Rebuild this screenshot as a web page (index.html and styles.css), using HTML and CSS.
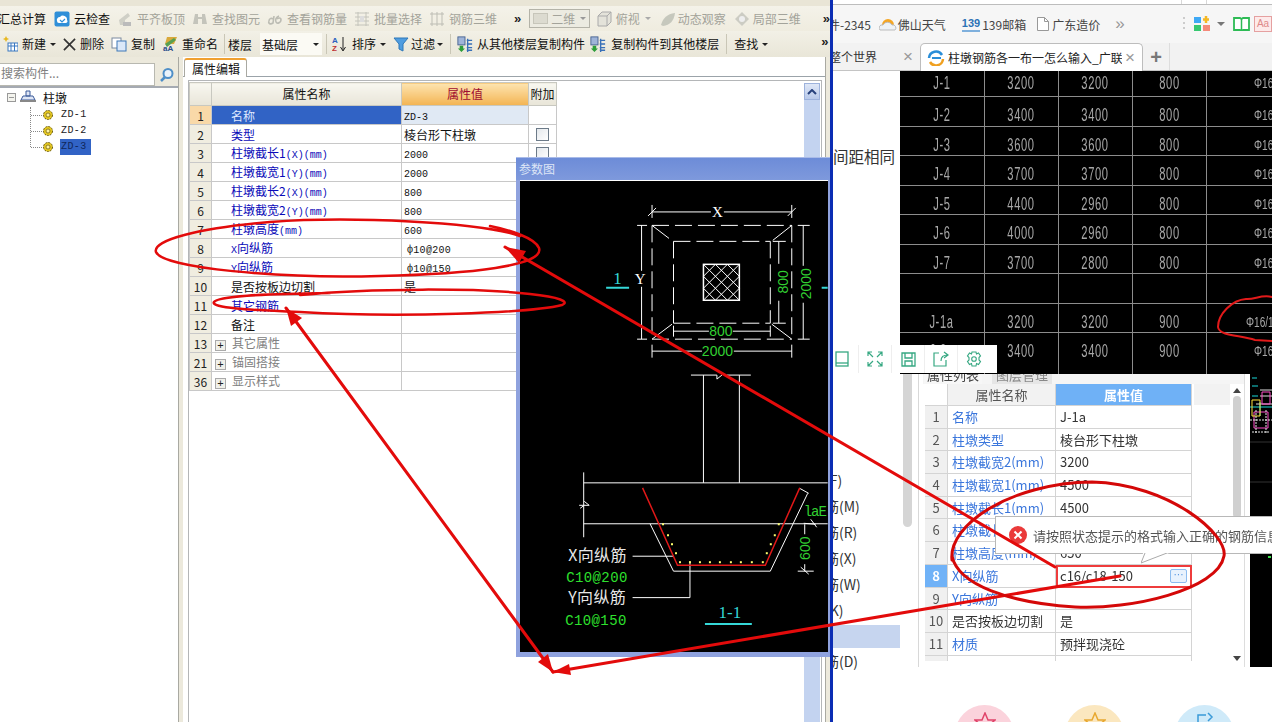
FILE: index.html
```html
<!DOCTYPE html>
<html lang="zh">
<head>
<meta charset="utf-8">
<title>柱墩钢筋</title>
<link rel="stylesheet" href="styles.css">
</head>
<body>
<div class="app">
  <div class="toolbar row1">
    <span class="tb first"><span>汇总计算</span></span>
    <span class="tb cloud"><svg class="ic" viewBox="0 0 16 16"><rect x="0.5" y="0.5" width="15" height="15" rx="2" fill="#2f8fd8"/><path d="M3 10a3 3 0 0 1 3-4 4 4 0 0 1 7 3 2 2 0 0 1-1 3H5a2 2 0 0 1-2-2z" fill="#fff"/><path d="M6 9l2 2 3-3" stroke="#2f8fd8" stroke-width="1.2" fill="none"/></svg><span>云检查</span></span>
    <span class="tb off"><svg class="ic" viewBox="0 0 16 16"><path d="M2 9l9-7 2 3-5 4v5H3z" fill="#cfcfc6"/><rect x="6" y="11" width="8" height="4" fill="#bbb"/></svg><span>平齐板顶</span></span>
    <span class="tb off"><svg class="ic" viewBox="0 0 16 16"><path d="M3 3h3v3h4V3h3l2 10h-5V8H6v5H1z" fill="#c4c4bb"/></svg><span>查找图元</span></span>
    <span class="tb off"><svg class="ic" viewBox="0 0 16 16"><path d="M2 10c0-3 3-3 4-2M7 5l-1 7c-3 2-5 0-4-2M12 5c-3 1-4 4-3 6s5 1 5-2-3-2-4-1" stroke="#bcbcb3" stroke-width="1.6" fill="none"/></svg><span>查看钢筋量</span></span>
    <span class="tb off"><svg class="ic" viewBox="0 0 16 16"><path d="M1 2h14M1 6h14M1 10h14M1 14h14M4 1v14M12 1v14" stroke="#c4c4bb" fill="none"/><rect x="6" y="5" width="4" height="6" fill="#ddd"/></svg><span>批量选择</span></span>
    <span class="tb off"><svg class="ic" viewBox="0 0 16 16"><path d="M1 3h14M1 13h14M3 1v14M8 1v14M13 1v14" stroke="#bdbdb4" fill="none"/></svg><span>钢筋三维</span></span>
    <span class="more m1">»</span>
    <span class="combo2d"><i class="sw"></i><span>二维</span><i class="car c2d"></i></span>
    <span class="tb off t3"><svg class="ic" viewBox="0 0 16 16"><path d="M2 5l4-4h9v10l-4 4H2zM2 5h9v10M11 5l4-4" stroke="#aaa" fill="#e4e3da"/></svg><span>俯视</span><i class="car cg"></i></span>
    <span class="tb off t4"><svg class="ic" viewBox="0 0 16 16"><path d="M1 14c2-7 6-11 14-12-1 8-5 12-12 13z" fill="#c6c8bd"/></svg><span>动态观察</span></span>
    <span class="tb off t5"><svg class="ic" viewBox="0 0 16 16"><path d="M8 1l7 7-7 7-7-7z" fill="#ccccc3"/><circle cx="8" cy="8" r="3" fill="#eee"/></svg><span>局部三维</span></span>
    <span class="more m2">»</span>
  </div>
  <div class="toolbar row2">
    <span class="tb"><svg class="ic" viewBox="0 0 16 16"><path d="M4 0l1 2 2 1-2 1-1 2-1-2-2-1 2-1z" fill="#e8b820"/><rect x="6" y="7" width="10" height="8" fill="#fff" stroke="#3a78c0"/><path d="M6 10h10M9 7v8M12.500 7v8" stroke="#3a78c0"/></svg><span>新建</span><i class="car"></i></span>
    <span class="tb"><svg class="ic del" viewBox="0 0 14 14"><path d="M1 1l12 12M13 1L1 13" stroke="#333" stroke-width="1.8"/></svg><span>删除</span></span>
    <span class="tb"><svg class="ic" viewBox="0 0 16 16"><rect x="1" y="2" width="9" height="10" fill="#fff" stroke="#7a8aa0"/><rect x="6" y="5" width="9" height="10" fill="#dbe8f8" stroke="#3f78b8"/></svg><span>复制</span></span>
    <span class="tb"><svg class="ic" viewBox="0 0 16 16"><path d="M5 1h10l-3 7H3z" fill="#d9a93c"/><path d="M3 8l9-6 2 2-9 7z" fill="#58a050"/><text x="1" y="15" class="az">aA</text></svg><span>重命名</span></span>
    <i class="sep s1"></i>
    <span class="lbl">楼层</span>
    <span class="floor"><span>基础层</span><i class="car"></i></span>
    <i class="sep s2"></i>
    <span class="tb x6"><svg class="ic" viewBox="0 0 16 16"><text x="0" y="7" class="sort a">A</text><text x="0" y="15" class="sort z">Z</text><path d="M11 1v13M8.500 11l2.500 4 2.500-4" stroke="#222" fill="none"/></svg><span>排序</span><i class="car"></i></span>
    <span class="tb x3"><svg class="ic" viewBox="0 0 16 16"><path d="M1 2h14l-5 6v7l-4-2V8z" fill="#4f9de0" stroke="#2f78b8"/></svg><span>过滤</span><i class="car"></i></span>
    <i class="sep"></i>
    <span class="tb x4"><svg class="ic" viewBox="0 0 18 18"><rect x="1" y="1" width="8" height="9" fill="#9fb4d8" stroke="#44608f"/><path d="M3 11h4v3h2l-4 4-4-4h2z" fill="#2e9e3a"/><path d="M11 5h6M11 9h6M11 13h6M11 16h6M12 3v15" stroke="#3870b8" stroke-width="1.500"/></svg><span>从其他楼层复制构件</span></span>
    <span class="tb x5"><svg class="ic" viewBox="0 0 18 18"><rect x="1" y="1" width="8" height="9" fill="#9fb4d8" stroke="#44608f"/><path d="M3 11h4v3h2l-4 4-4-4h2z" fill="#2e9e3a"/><path d="M11 5h6M11 9h6M11 13h6M11 16h6M12 3v15" stroke="#3870b8" stroke-width="1.500"/></svg><span>复制构件到其他楼层</span></span>
    <i class="sep"></i>
    <span class="tb"><span>查找</span><i class="car"></i></span>
    <span class="more m3">»</span>
  </div>

  <div class="work">
    <aside class="side">
      <div class="search">
        <span class="search-input">搜索构件...</span>
        <span class="search-btn"><svg width="16" height="16" viewBox="0 0 16 16"><circle cx="9" cy="6.500" r="4.500" fill="#eaf3fb" stroke="#4f8fc8" stroke-width="2"/><path d="M6 10l-4 4" stroke="#4f8fc8" stroke-width="2.500"/></svg></span>
      </div>
      <div class="tree">
        <div class="root"><i class="minus"></i><svg class="rooticon" width="16" height="14" viewBox="0 0 16 14"><path d="M6 1h4v5H6zM3 6h10l2 4H1z" fill="#dfe6f5" stroke="#3a5a9a"/><path d="M0 11h16" stroke="#888" stroke-width="2"/></svg><span>柱墩</span></div>
        <ul class="kids">
          <li><svg class="gear" viewBox="0 0 12 12"><circle cx="6" cy="6" r="4.500" fill="#e5c820" stroke="#6a5a10" stroke-dasharray="2 1"/><circle cx="6" cy="6" r="2" fill="#fff3a0" stroke="#6a5a10" stroke-width=".7"/></svg><span class="zd">ZD-1</span></li>
          <li><svg class="gear" viewBox="0 0 12 12"><circle cx="6" cy="6" r="4.500" fill="#e5c820" stroke="#6a5a10" stroke-dasharray="2 1"/><circle cx="6" cy="6" r="2" fill="#fff3a0" stroke="#6a5a10" stroke-width=".7"/></svg><span class="zd">ZD-2</span></li>
          <li><svg class="gear" viewBox="0 0 12 12"><circle cx="6" cy="6" r="4.500" fill="#e5c820" stroke="#6a5a10" stroke-dasharray="2 1"/><circle cx="6" cy="6" r="2" fill="#fff3a0" stroke="#6a5a10" stroke-width=".7"/></svg><span class="zd sel">ZD-3</span></li>
        </ul>
      </div>
    </aside>
    <section class="main">
      <div class="tabbar"><span class="tab">属性编辑</span></div>
      <div class="frame">
        <table class="props">
          <colgroup><col class="c0"><col class="c1"><col class="c2"><col class="c3"></colgroup>
          <thead><tr><th></th><th>属性名称</th><th class="hv">属性值</th><th>附加</th></tr></thead>
          <tbody>
            <tr class="cur"><td class="n">1</td><td class="b">名称</td><td><span class="lat">ZD-3</span></td><td></td></tr>
            <tr><td class="n">2</td><td class="b">类型</td><td>棱台形下柱墩</td><td><i class="chk"></i></td></tr>
            <tr><td class="n">3</td><td class="b">柱墩截长1<span class="lat">(X)(mm)</span></td><td><span class="lat">2000</span></td><td><i class="chk"></i></td></tr>
            <tr><td class="n">4</td><td class="b">柱墩截宽1<span class="lat">(Y)(mm)</span></td><td><span class="lat">2000</span></td><td><i class="chk"></i></td></tr>
            <tr><td class="n">5</td><td class="b">柱墩截长2<span class="lat">(X)(mm)</span></td><td><span class="lat">800</span></td><td><i class="chk"></i></td></tr>
            <tr><td class="n">6</td><td class="b">柱墩截宽2<span class="lat">(Y)(mm)</span></td><td><span class="lat">800</span></td><td><i class="chk"></i></td></tr>
            <tr><td class="n">7</td><td class="b">柱墩高度<span class="lat">(mm)</span></td><td><span class="lat">600</span></td><td><i class="chk"></i></td></tr>
            <tr><td class="n">8</td><td class="b"><span class="lat">X</span>向纵筋</td><td><span class="lat bar">ф10@200</span></td><td></td></tr>
            <tr><td class="n">9</td><td class="b"><span class="lat">Y</span>向纵筋</td><td><span class="lat bar">ф10@150</span></td><td></td></tr>
            <tr><td class="n">10</td><td class="k">是否按板边切割</td><td>是</td><td></td></tr>
            <tr><td class="n">11</td><td class="b">其它钢筋</td><td></td><td></td></tr>
            <tr><td class="n">12</td><td class="k">备注</td><td></td><td></td></tr>
            <tr><td class="n">13</td><td class="g"><i class="plus">+</i>其它属性</td><td></td><td></td></tr>
            <tr><td class="n">21</td><td class="g"><i class="plus">+</i>锚固搭接</td><td></td><td></td></tr>
            <tr><td class="n">36</td><td class="g"><i class="plus">+</i>显示样式</td><td></td><td></td></tr>
          </tbody>
        </table>
        <div class="vbar"><span class="vbtn"><svg width="10" height="6" viewBox="0 0 10 6"><path d="M1 5l4-4 4 4" stroke="#27417c" stroke-width="2" fill="none"/></svg></span></div>
      </div>
    </section>
  </div>

  <div class="param">
    <div class="param-title">参数图</div>
    <svg class="cad" width="308" height="472" viewBox="520 180 308 472">
      <g stroke="#fff" fill="none" stroke-width="1">
        <path d="M652 204v13M792 204v13M652 211H711M724 211H792M648 215l8-8M788 215l8-8"/>
        <path d="M652 224.500H792M652 338.500H792M652 224.500V338.500M792 224.500V338.500" stroke-dasharray="17 6"/>
        <path d="M673.500 240.500H770.500M673.500 322.500H770.500M673.500 240.500V322.500M770.500 240.500V322.500" stroke-dasharray="17 6"/>
        <path d="M652 224.500l17 13M792 224.500l-19 15M652 338.500l20-15M792 338.500l-20-15"/>
        <path d="M641.500 224.500V270M641.500 286V338.500M637 224.500h10M637 338.500h10"/>
        <path d="M779 240.500V263M779 300V322.500M773 240.500h13M773 322.500h13"/>
        <path d="M803.500 224.500V265M803.500 302V338.500M798 224.500h12M798 338.500h12"/>
        <path d="M673.500 330.500H709M733 330.500H770.500M673.500 325v11M770.500 325v11"/>
        <path d="M652 350.500H702M734 350.500H792M652 344v13M792 344v13"/>
        <rect x="703.500" y="263.500" width="36" height="36" stroke-width="1.500"/>
        <path d="M703.500 275.500l12-12M703.500 287.500l24-24M703.500 299.500l36-36M715.500 299.500l24-24M727.500 299.500l12-12M715.500 263.500l24 24M703.500 263.500l36 36M727.500 263.500l12 12M703.500 275.500l24 24M703.500 287.500l12 12"/>
        <path d="M691 374.500H717M727 374.500H751M703.500 374.500V482.500M739.500 374.500V482.500M722 374.500l-5 4v-4"/>
        <path d="M583.500 472V537M583.500 482.500H828M583.500 523.500H828M579 505h10l-5-4M584 505l-4 3"/>
        <path d="M650 523.500L673.500 571H770.500L808 493"/>
        <path d="M800 488l9 5M804 523l12 1M811 519l6 8"/>
        <path d="M632.500 556H674M632.500 597.500H690V561"/>
        <path d="M805 524V534M805 564V571M798 571h16M801 567l8 7"/>
      </g>
      <path d="M642.500 487.500L677.500 565H765.500L800 487.500" stroke="#e01818" stroke-width="1.500" fill="none"/>
      <g fill="#ffff70">
        <rect x="662" y="523" width="2" height="2"/><rect x="667" y="534" width="2" height="2"/><rect x="671" y="543" width="2" height="2"/><rect x="675" y="552" width="2" height="2"/><rect x="679" y="561" width="2" height="2"/>
        <rect x="689" y="561" width="2" height="2"/><rect x="699" y="561" width="2" height="2"/><rect x="709" y="561" width="2" height="2"/><rect x="719" y="561" width="2" height="2"/><rect x="730" y="561" width="2" height="2"/><rect x="740" y="561" width="2" height="2"/><rect x="751" y="561" width="2" height="2"/><rect x="762" y="561" width="2" height="2"/>
        <rect x="766" y="552" width="2" height="2"/><rect x="770" y="543" width="2" height="2"/><rect x="774" y="534" width="2" height="2"/><rect x="778" y="523" width="2" height="2"/>
      </g>
      <g class="t-w">
        <text x="717.500" y="216" text-anchor="middle">X</text>
        <text x="640" y="283" text-anchor="middle">Y</text>
      </g>
      <g class="t-g">
        <text x="721" y="335.500" text-anchor="middle">800</text>
        <text x="717.500" y="355.500" text-anchor="middle">2000</text>
        <text transform="translate(788 281) rotate(-90)" text-anchor="middle">800</text>
        <text transform="translate(811 283) rotate(-90)" text-anchor="middle">2000</text>
        <text transform="translate(810 548) rotate(-90)" text-anchor="middle">600</text>
      </g>
      <text x="804" y="516" class="t-la">laE</text>
      <text x="617.500" y="283" class="t-c" text-anchor="middle">1</text>
      <text x="730" y="618" class="t-c" text-anchor="middle">1-1</text>
      <path d="M606 287h23M822 287h6M705 624h47" stroke="#35d8d8" stroke-width="2"/>
      <text x="568" y="561" class="t-l">X向纵筋</text>
      <text x="566" y="582" class="t-m">C10@200</text>
      <text x="568" y="603" class="t-l">Y向纵筋</text>
      <text x="565" y="625" class="t-m">C10@150</text>
    </svg>
  </div>
</div>

<div class="divider"></div>

<div class="browser">
  <div class="chrome-top"><i class="cut"></i><i class="cut"></i></div>
  <div class="bookmarks">
    <span class="bm bm0">件-2345</span>
    <span class="bm bm1"><svg width="18" height="16" viewBox="0 0 18 16"><path d="M3 9a6 6 0 0 1 12 0z" fill="#f5a623"/><path d="M1 14a3 3 0 0 1 3-5 5 5 0 0 1 9 0 3 3 0 0 1 3 5z" fill="#eef2f5" stroke="#bbb"/></svg>佛山天气</span>
    <span class="bm bm2"><b class="mail">139</b>139邮箱</span>
    <span class="bm bm3"><svg width="12" height="14" viewBox="0 0 12 14"><path d="M.5.500h7l4 4v9H.5z" fill="#fff" stroke="#999"/><path d="M7.500.500v4h4" fill="none" stroke="#999"/></svg>广东造价</span>
    <span class="bm-more">»</span>
    <span class="bm-tools">
      <i class="dots"></i>
      <svg width="17" height="16" viewBox="0 0 17 16"><rect y="1" width="7" height="6" fill="#3fa9f5"/><rect y="9" width="7" height="6" fill="#37c871"/><rect x="9" y="9" width="7" height="6" fill="#f58a7a"/><path d="M12 0v7M9 3.500h6" stroke="#f5b823" stroke-width="2.500"/></svg>
      <i class="tcar"></i>
      <svg class="book" width="17" height="14" viewBox="0 0 17 14"><path d="M1 1h6l1.500 1L10 1h6v12h-6l-1.500 1L7 13H1z" fill="#fff" stroke="#2dbb55" stroke-width="1.800"/><path d="M8.500 2v11" stroke="#2dbb55" stroke-width="1.500"/></svg>
      <span class="aa">Aa</span>
    </span>
  </div>
  <div class="tabs">
    <span class="btab"><span class="bprev">整个世界</span><i class="bx">×</i></span>
    <span class="btab on"><svg width="18" height="16" viewBox="0 0 18 16"><path d="M2 8a7 7 0 0 1 13-3" stroke="#2a8ed8" stroke-width="2.500" fill="none"/><path d="M16 9a7 7 0 0 1-13 3" stroke="#f0a020" stroke-width="2.500" fill="none"/><path d="M5 8h9" stroke="#2a8ed8" stroke-width="2"/></svg><span class="btitle">柱墩钢筋各一布一怎么输入_广联</span><i class="bx">×</i></span>
    <span class="bplus">+</span>
    <i class="bsep"></i>
  </div>
  <div class="content">
    <div class="col-left">
      <p class="same">间距相同</p>
      <ul class="labels">
        <li>柱(F)</li>
        <li>底筋(M)</li>
        <li>底筋(R)</li>
        <li>底筋(X)</li>
        <li>底筋(W)</li>
        <li>柱(K)</li>
        <li class="hl"></li>
        <li>底筋(D)</li>
      </ul>
    </div>
    <div class="col-right">
      <div class="dwg">
        <span><i>J-1</i></span><span><i>3200</i></span><span><i>3200</i></span><span><i>800</i></span><span class="ph"><i>Φ16</i></span>
        <span><i>J-2</i></span><span><i>3400</i></span><span><i>3400</i></span><span><i>800</i></span><span class="ph"><i>Φ16</i></span>
        <span><i>J-3</i></span><span><i>3600</i></span><span><i>3600</i></span><span><i>800</i></span><span class="ph"><i>Φ16</i></span>
        <span><i>J-4</i></span><span><i>3700</i></span><span><i>3700</i></span><span><i>800</i></span><span class="ph"><i>Φ16</i></span>
        <span><i>J-5</i></span><span><i>4400</i></span><span><i>2960</i></span><span><i>800</i></span><span class="ph"><i>Φ16</i></span>
        <span><i>J-6</i></span><span><i>4000</i></span><span><i>2960</i></span><span><i>800</i></span><span class="ph"><i>Φ16</i></span>
        <span><i>J-7</i></span><span><i>3700</i></span><span><i>2800</i></span><span><i>800</i></span><span class="ph"><i>Φ16</i></span>
        <span></span><span></span><span></span><span></span><span class="ph"></span>
        <span><i>J-1a</i></span><span><i>3200</i></span><span><i>3200</i></span><span><i>900</i></span><span class="ph ph2"><i>Φ16/12</i></span>
        <span class="last"><i>J-2a</i></span><span class="last"><i>3400</i></span><span class="last"><i>3400</i></span><span class="last"><i>900</i></span><span class="ph last"><i>Φ16</i></span>
      </div>
      <div class="shot">
        <div class="shot-left"><i class="sthumb"></i></div>
        <div class="shot-frame">
          <div class="shot-tabs"><span class="st on">属性列表</span><span class="st">图层管理</span></div>
          <div class="shot-body">
            <div class="pgrid">
              <span class="ph0"></span><span class="ph1">属性名称</span><span class="ph2h">属性值</span>
              <span class="i">1</span><span class="nm">名称</span><span class="vl">J-1a</span>
              <span class="i">2</span><span class="nm">柱墩类型</span><span class="vl">棱台形下柱墩</span>
              <span class="i">3</span><span class="nm">柱墩截宽2(mm)</span><span class="vl">3200</span>
              <span class="i">4</span><span class="nm">柱墩截宽1(mm)</span><span class="vl">4500</span>
              <span class="i">5</span><span class="nm">柱墩截长1(mm)</span><span class="vl">4500</span>
              <span class="i">6</span><span class="nm">柱墩截长2(mm)</span><span class="vl">3200</span>
              <span class="i">7</span><span class="nm">柱墩高度(mm)</span><span class="vl">650</span>
              <span class="i cur8">8</span><span class="nm">X向纵筋</span><span class="vl err">c16/c18-150<i class="dotbtn">···</i></span>
              <span class="i">9</span><span class="nm">Y向纵筋</span><span class="vl"></span>
              <span class="i">10</span><span class="nm dk">是否按板边切割</span><span class="vl">是</span>
              <span class="i">11</span><span class="nm">材质</span><span class="vl">预拌现浇砼</span>
              <span class="i"></span><span class="nm"></span><span class="vl"></span>
            </div>
            <div class="shot-head-fill"></div>
            <div class="shot-scroll"><i class="up"></i><i class="thumb"></i><i class="down"></i></div>
          </div>
        </div>
        <div class="shot-cad">
          <svg width="22" height="293" viewBox="0 0 22 293"><g fill="none" stroke-width="1"><path d="M2 4h5M2 12h6M2 22h6M0 33h22M10 28v14" stroke="#19d8d8"/><path d="M10 16h12M10 22h12M6 30h16" stroke="#ddd"/><path d="M12 18h8v12h-8zM4 38h14v16H4z" stroke="#ff4dc8"/><path d="M2 26h8v16H2z" stroke="#ffe23a"/><path d="M0 46h22M2 58h18M6 36v24M16 36v24" stroke="#e8e8e8" stroke-dasharray="2 1"/><path d="M0 68h22M0 108h22M0 172h22" stroke="#333"/><path d="M18 183h3" stroke="#3be04a" stroke-width="2"/></g></svg>
        </div>
      </div>
      <div class="badges">
        <span class="badge pink"><svg width="22" height="14" viewBox="0 0 22 14"><path d="M11 1l3 7h7l-6 5H7L1 8h7z" fill="none" stroke="#e0446a" stroke-width="1.500"/></svg></span>
        <span class="badge gold"><svg width="22" height="14" viewBox="0 0 22 14"><path d="M11 1l3 7h7l-6 5H7L1 8h7z" fill="none" stroke="#e8a830" stroke-width="1.500"/></svg></span>
        <span class="badge sky"><svg width="22" height="14" viewBox="0 0 22 14"><path d="M4 13V3h8M14 1l4 4-4 4M16 13H8" fill="none" stroke="#3a9ad8" stroke-width="1.500"/></svg></span>
      </div>
    </div>
    <div class="float-tools">
      <span class="ft"><svg width="14" height="16" viewBox="0 0 14 16"><rect x="1" y="1" width="12" height="14" fill="none" stroke="#36a882" stroke-width="1.300"/><path d="M1 12h12" stroke="#36a882" stroke-width="1.300"/></svg></span>
      <span class="ft"><svg width="16" height="16" viewBox="0 0 16 16"><path d="M1 1l5 5M15 1l-5 5M1 15l5-5M15 15l-5-5M1 5V1h4M11 1h4v4M1 11v4h4M15 11v4h-4" fill="none" stroke="#36a882" stroke-width="1.200"/></svg></span>
      <span class="ft"><svg width="15" height="15" viewBox="0 0 15 15"><path d="M1 1h13v13H1zM4 1v5h7V1M4 14V9h7v5" fill="none" stroke="#36a882" stroke-width="1.300"/></svg></span>
      <span class="ft"><svg width="16" height="16" viewBox="0 0 16 16"><path d="M6 2H1v13h12V9M8 10c0-4 2-6 7-6M11 1l4 3-4 3" fill="none" stroke="#36a882" stroke-width="1.200"/></svg></span>
      <span class="ft"><svg width="16" height="16" viewBox="0 0 16 16"><path d="M6 1h4l.5 2 2-1 2 3-1.500 1.500V9l1.500 1.500-2 3-2-1-.5 2.500H6l-.5-2.500-2 1-2-3L3 9V6.500L1.500 5l2-3 2 1z" fill="none" stroke="#36a882" stroke-width="1.100"/><circle cx="8" cy="8" r="2.300" fill="none" stroke="#36a882" stroke-width="1.100"/></svg></span>
    </div>
    <div class="tip">
      <svg class="tip-x" width="18" height="18" viewBox="0 0 18 18"><circle cx="9" cy="9" r="9" fill="#ea3a3a"/><path d="M5.500 5.500l7 7M12.500 5.500l-7 7" stroke="#fff" stroke-width="2"/></svg>
      <span>请按照状态提示的格式输入正确的钢筋信息</span>
      <svg class="tip-tail" width="30" height="12" viewBox="0 0 30 12"><path d="M2 0L0 10 28 0" fill="#fff"/><path d="M0 10L26 0M0 10l4-10" fill="none" stroke="#aaa"/></svg>
    </div>
  </div>
</div>

<svg class="marks" width="1272" height="722" viewBox="0 0 1272 722">
  <g fill="none" stroke="#e30b0b" stroke-linecap="round">
    <path d="M520 236C480 222 350 216 270 222C200 228 152 240 156 252C162 268 280 279 380 276C470 274 545 266 539 248C535 238 510 230 490 226" stroke-width="2.500"/>
    <path d="M300 295C370 288 480 288 530 294C560 297 570 302 562 305C530 313 400 318 300 312C250 310 210 308 214 302C218 296 260 294 330 293" stroke-width="2.500"/>
    <path d="M505 247L1055 567" stroke-width="3"/>
    <path d="M553 672L1120 576" stroke-width="3"/>
    <path d="M286 308L553 672" stroke-width="3"/>
    <path d="M1272 297C1262 294 1254 300 1246 299C1232 300 1218 314 1218 327C1219 336 1240 335 1255 340L1272 341" stroke="#e21a1a" stroke-width="2"/>
    <path d="M952 560C948 525 1010 483 1092 482C1170 484 1228 535 1224 556C1218 590 1130 610 1075 607C1010 603 958 585 952 556" stroke="#d40808" stroke-width="3"/>
  </g>
  <g fill="#e30b0b">
    <path d="M505 247L526 251L519 263Z"/>
    <path d="M286 308L302 318L291 326Z"/>
    <path d="M553 672L571 675L569 664Z"/>
    <path d="M553 672L548 654L538 662Z"/>
  </g>
</svg>
</body>
</html>
```

FILE: styles.css
```css
* { box-sizing: border-box; }
html, body { margin: 0; padding: 0; }
body {
  width: 1272px;
  height: 722px;
  overflow: hidden;
  display: flex;
  position: relative;
  background: #fff;
  font-family: "Noto Sans CJK SC", "Liberation Sans", sans-serif;
  font-size: 12px;
  color: #111;
}
ul { list-style: none; margin: 0; padding: 0; }
i { font-style: normal; }

/* application window */
.app {
  width: 830px;
  height: 722px;
  flex: none;
  display: flex;
  flex-direction: column;
  position: relative;
  overflow: hidden;
  background: #ece9dc;
}
.divider { width: 3px; flex: none; background: #0b2db4; }

.toolbar { display: flex; align-items: center; flex: none; white-space: nowrap; }
.row1 { height: 31px; padding-top: 6px; gap: 7px; background: linear-gradient(#e9e5d6 0 6px, #f4f2e9 6px, #efecdf 100%); }
.row2 { height: 26px; gap: 7px; padding-left: 2px; background: linear-gradient(#f2f0e6, #e9e6d8); }
.tb { display: inline-flex; align-items: center; gap: 4px; line-height: 16px; }
.tb.first { margin-left: -2px; }
.tb.cloud { margin-left: 1px; }
.tb.off { color: #a3a39a; }
.tb.t3 { margin-left: -1px; gap: 4px; }
.tb.t4 { margin-left: 2px; gap: 2px; }
.tb.t5 { margin-left: 1px; gap: 3px; }
.ic { width: 16px; height: 16px; flex: none; }
.del { width: 13px; height: 13px; }
.x3 { gap: 2px; }
.x4 { margin-left: -1px; }
.x5 { margin-left: -2px; gap: 5px; }
.x6 { margin-left: -2px; }
.car { width: 0; height: 0; border: 3px solid transparent; border-top: 3px solid #222; border-bottom: 0; display: inline-block; }
.car.cg { border-top-color: #aaa; margin-left: 1px; }
.more { font: bold 13px/10px "Liberation Sans", sans-serif; color: #222; align-self: flex-start; padding-top: 4px; }
.m1 { margin-left: 10px; margin-top: 4px; }
.m2 { margin-left: 15px; margin-top: 4px; }
.m3 { margin-left: 46px; margin-top: 2px; }
.combo2d { display: inline-flex; align-items: center; width: 62px; height: 19px; margin-left: 1px; border: 1px solid #b4b3a8; background: #ecebe1; color: #a3a39a; padding-left: 3px; gap: 3px; }
.sw { width: 15px; height: 11px; background: #dcdbd0; border: 1px solid #c7c6ba; }
.c2d { margin-left: auto; margin-right: 3px; border-top-color: #999; }
.sep { width: 1px; height: 20px; background: #c9c6b6; flex: none; }
.s1 { margin-left: -1px; }
.s2 { margin-left: -3px; }
.lbl { margin-left: -4px; }
.floor { display: inline-flex; align-items: center; width: 62px; height: 22px; margin-left: 1px; padding-left: 2px; background: #fbfaf4; gap: 15px; }

.work { flex: 1; display: flex; min-height: 0; gap: 4px; }
.side { width: 179px; flex: none; display: flex; flex-direction: column; padding-top: 6px; border-right: 1px solid #a9a9a2; }
.search { display: flex; height: 25px; flex: none; border-bottom: 2px solid #a5aab2; }
.search-input { width: 155px; background: #fff; border: 1px solid #b8b8b0; border-left: 0; color: #808080; line-height: 18px; padding-left: 1px; }
.search-btn { flex: 1; display: flex; align-items: center; justify-content: center; }
.tree { flex: 1; background: #fff; padding-top: 1px; }
.root { display: flex; align-items: center; height: 16px; padding-left: 7px; }
.minus { width: 9px; height: 9px; border: 1px solid #999; background: linear-gradient(#999,#999) center/5px 1px no-repeat, #f4f4ee; flex: none; }
.rooticon { margin: 0 7px 0 4px; flex: none; }
.kids { margin: 2px 0 0 30px; border-left: 1px dotted #888; height: 40px; }
.kids li { display: flex; align-items: center; height: 16px; }
.kids li::before { content: ""; width: 11px; border-top: 1px dotted #888; flex: none; }
.gear { width: 12px; height: 12px; flex: none; }
.zd { font: 10px/16px "Liberation Mono", monospace; margin-left: 6px; padding: 0 4px 0 1px; color: #222; letter-spacing: .4px; }
.sel { background: #3163c5; color: #10275a; }

.main { flex: 1; min-width: 0; display: flex; flex-direction: column; background: #fff; margin-right: 4px; border-right: 1px solid #a9a9a2; padding-top: 1px; }
.tabbar { height: 19px; flex: none; padding-left: 1px; border-bottom: 1px solid #9ba3a9; background: #fff; }
.tab { display: inline-block; width: 63px; height: 19px; line-height: 18px; padding-left: 7px; border: 1px solid #a9a9a2; border-bottom: 0; border-top: 2px solid #f0a030; border-radius: 3px 3px 0 0; background: #fff; position: relative; }
.frame { flex: 1; display: flex; justify-content: space-between; align-items: flex-start; margin: 3px 3px 0 5px; border: 1px solid #b4b6b8; border-bottom: 0; padding-top: 1px; min-height: 0; }
.props { border-collapse: collapse; table-layout: fixed; width: 367px; }
.c0 { width: 22px; } .c1 { width: 190px; } .c2 { width: 127px; } .c3 { width: 28px; }
.props th { height: 23px; font-weight: 400; border: 1px solid #c8c8c0; background: linear-gradient(#f8f7f0, #e8e5d8); line-height: 14px; padding: 0; }
.props th.hv { background: linear-gradient(#fde4b0, #f3b452); color: #a00c30; }
.props td { height: 19px; padding: 0 0 0 2px; border: 1px solid #c8c8c8; line-height: 13px; white-space: nowrap; overflow: hidden; }
.props td.n { padding: 0; text-align: center; background: #f0ede0; color: #222; }
.props td.b { padding-left: 19px; color: #0a0ab8; }
.props td.k { padding-left: 19px; color: #111; }
.props td.g { padding-left: 3px; color: #808080; }
.props .cur td { background: #e0e9f4; }
.props .cur td.n { background: #f9d9a8; }
.props .cur td.b { background: #3163c5; color: #dfe8ff; }
.props .cur td:last-child { background: #fff; }
.lat { font: 10px/10px "Liberation Mono", monospace; }
.bar { margin-left: 3px; letter-spacing: .3px; }
.chk { display: block; width: 13px; height: 13px; margin: 0 auto; border: 1px solid #6c7a88; background: linear-gradient(135deg, #e4e8ec, #fff); position: relative; left: -1px; }
.plus { display: inline-block; width: 11px; height: 11px; margin-right: 6px; border: 1px solid #aaa; background: #f0f0ea; color: #222; font: 11px/9px "Liberation Sans", sans-serif; text-align: center; vertical-align: -1px; }
.vbar { width: 16px; align-self: stretch; background: #c3d3f0; margin-right: 1px; margin-top: 1px; }
.vbtn { display: flex; align-items: center; justify-content: center; height: 17px; background: linear-gradient(#dfe7f6, #b8c9ea); border: 1px solid #9db2dc; }

/* floating parameter window */
.param { position: absolute; left: 516px; top: 157px; width: 314px; height: 500px; background: #8fa2de; padding: 0 2px 5px 4px; border-top: 1px solid #a9bbe8; }
.param-title { height: 22px; margin: 0 -2px 0 -4px; padding-left: 3px; background: linear-gradient(#6d8cd8, #7e99dc); color: #dde5f6; line-height: 22px; font-size: 12px; }
.cad { display: block; background: #000; border-top: 1px solid #fff; }
.t-w text { font: 15px "Liberation Serif", serif; fill: #fff; }
.t-g text { font: 14px "Liberation Sans", sans-serif; fill: #32d032; }
.t-la { font: 14px "Liberation Mono", monospace; fill: #32d032; letter-spacing: -1px; }
.t-c { font: 17px "Liberation Serif", serif; fill: #35d8d8; }
.t-l { font: 16px "Noto Sans CJK SC", sans-serif; fill: #e8e8e8; letter-spacing: .4px; }
.t-m { font: 14px "Liberation Mono", monospace; fill: #2ee02e; letter-spacing: .4px; }

/* browser */
.browser { flex: 1; min-width: 0; display: flex; flex-direction: column; position: relative; overflow: hidden; background: #fff; }
.chrome-top { height: 5px; flex: none; border-bottom: 1px solid #bdbdbd; display: flex; justify-content: flex-end; gap: 24px; padding-right: 65px; }
.cut { width: 1px; height: 4px; background: #d8d8d8; }
.bookmarks { height: 38px; flex: none; display: flex; align-items: center; background: #f6f6f6; color: #444; font-size: 12px; white-space: nowrap; }
.bm { display: inline-flex; align-items: center; }
.bm0 { margin-left: -5px; }
.bm1 { margin-left: 8px; gap: 1px; }
.bm2 { margin-left: 16px; gap: 2px; }
.bm3 { margin-left: 11px; gap: 3px; }
.mail { font: bold 11px/14px "Liberation Sans", sans-serif; color: #2c72b5; border-bottom: 2px solid #7fb0dd; }
.bm-more { margin-left: 15px; font: 17px/20px "Liberation Sans", sans-serif; color: #999; }
.bm-tools { margin-left: auto; display: inline-flex; align-items: center; }
.dots { width: 2px; height: 14px; background: repeating-linear-gradient(#ccc 0 2px, transparent 2px 5px); margin-right: 9px; }
.tcar { width: 0; height: 0; border: 4px solid transparent; border-top: 4px solid #777; border-bottom: 0; margin: 0 8px 0 6px; }
.book { margin-right: 4px; }
.aa { width: 18px; height: 16px; border: 1px solid #e5a0a0; background: #fdeaea; color: #d88; font: 10px/14px "Liberation Sans", sans-serif; text-align: center; }
.tabs { height: 28px; flex: none; display: flex; align-items: flex-end; background: #f2f2f2; border-bottom: 1px solid #c4c4c4; white-space: nowrap; color: #333; }
.btab { width: 87px; height: 27px; display: flex; align-items: center; font-size: 12px; }
.bprev { margin-left: -4px; }
.btab .bx { margin-left: auto; margin-right: 7px; color: #999; font: 17px/20px "Liberation Sans", sans-serif; }
.btab.on { width: 223px; height: 28px; margin-bottom: -1px; gap: 3px; padding-left: 6px; background: #fff; border: 1px solid #bdbdbd; border-bottom: 0; border-radius: 5px 5px 0 0; color: #222; }
.btitle { width: 174px; overflow: hidden; }
.bplus { width: 26px; text-align: center; font: bold 20px/26px "Liberation Sans", sans-serif; color: #777; }
.bsep { width: 1px; height: 27px; background: #ddd; }

.content { flex: 1; min-height: 0; display: flex; position: relative; }
.col-left { width: 67px; flex: none; overflow: hidden; }
.same { margin: 74px 0 0; height: 22px; line-height: 22px; font-size: 15.500px; color: #333; white-space: nowrap; }
.labels { margin: 300px 0 0 -22px; width: 89px; }
.labels li { height: 26px; line-height: 26px; font-size: 14px; color: #333; white-space: nowrap; }
.labels .hl { height: 23px; margin-top: 2px; margin-left: 22px; background: #c6d5ef; }

.col-right { flex: 1; min-width: 0; display: flex; flex-direction: column; }
.dwg { height: 303px; flex: none; display: grid; grid-template-columns: 85px 74px 74px 74px 1fr; grid-template-rows: 26px repeat(8, 29.500px) 41px; background: #000; }
.dwg span { border-right: 1px solid #8c8c8c; border-bottom: 1px solid #8c8c8c; color: #a8a8a8; text-align: center; font: 18px/36px "Liberation Sans", sans-serif; overflow: hidden; white-space: nowrap; }
.dwg span:nth-child(-n+5) { line-height: 25px; }
.dwg i { display: inline-block; transform: scaleX(.62); letter-spacing: 1px; }
.dwg .ph { border-right: 0; text-align: left; padding-left: 47px; font-size: 14px; }
.dwg .ph i { transform: scaleX(.72); transform-origin: left center; letter-spacing: 0; }
.dwg .ph2 { padding-left: 39px; }
.dwg .last { border-bottom: 0; }
.shot { height: 293px; flex: none; display: flex; background: #fff; }
.shot-left { width: 19px; flex: none; border-right: 1px solid #d8d8d8; padding: 0 6px 0 3px; }
.sthumb { display: block; width: 9px; height: 153px; background: #d5d5d5; border-radius: 0 0 5px 5px; }
.shot-frame { width: 322px; flex: none; margin-left: 4px; filter: blur(.35px); background: #f5f5f5; border-right: 1px solid #ddd; overflow: hidden; }
.shot-tabs { height: 10px; display: flex; gap: 10px; padding-left: 1px; overflow: hidden; }
.st { width: 60px; height: 10px; background: #e6e6e6; color: #888; font-size: 13px; line-height: 1px; text-align: center; overflow: hidden; }
.st.on { width: 58px; background: #f7f7f7; color: #444; }
.shot-body { position: relative; height: 283px; background: #fff; }
.pgrid { display: grid; grid-template-columns: 23px 108px 136px; grid-template-rows: 22px repeat(12, 22.700px); width: 269px; margin-left: 2px; height: 277px; overflow: hidden; }
.pgrid span { border-bottom: 1px solid #d4d4d4; border-right: 1px solid #d4d4d4; white-space: nowrap; overflow: hidden; font-size: 13px; line-height: 21px; }
.ph0 { background: #fff; }
.ph1 { background: #f2f2f2; text-align: center; color: #555; }
.ph2h { background: #6fb1f6; color: #fff; text-align: center; font-weight: 700; }
.i { background: #f0f0f0; color: #555; text-align: center; }
.nm { color: #3a76dc; padding-left: 4px; }
.nm.dk { color: #333; }
.vl { color: #333; padding-left: 4px; position: relative; }
.pgrid .cur8 { background: #70b2f7; color: #fff; font-weight: 700; }
.pgrid .err { border: 2px solid #ee3c3c; padding-left: 2px; line-height: 18px; }
.dotbtn { position: absolute; right: 3px; top: 2px; width: 17px; height: 14px; border: 1px solid #8cbcf0; border-radius: 2px; background: #e8f2fd; color: #4a8ede; font: 10px/9px "Liberation Sans", sans-serif; text-align: center; }
.shot-head-fill { position: absolute; left: 271px; top: 0; width: 36px; height: 21px; background: #f2f2f2; }
.shot-scroll { position: absolute; left: 309px; top: 0; width: 9px; height: 283px; display: flex; flex-direction: column; align-items: center; padding-top: 4px; }
.thumb { width: 8px; height: 122px; margin-top: 3px; background: #d0d0d0; border-radius: 4px; }
.up { border: 4px solid transparent; border-top: 0; border-bottom: 5px solid #444; }
.down { border: 4px solid transparent; border-bottom: 0; border-top: 5px solid #444; margin-top: auto; margin-bottom: 6px; }
.shot-cad { flex: 1; margin-left: 5px; background: #000; overflow: hidden; }
.shot-cad svg { display: block; }
.badges { display: flex; gap: 51px; margin: 38px 0 0 55px; }
.badge { width: 59px; height: 59px; border-radius: 50%; flex: none; display: flex; justify-content: center; padding-top: 7px; }
.pink { background: #fbd3dc; }
.gold { background: #fbe7bf; }
.sky { background: #cfeaf9; }

.float-tools { position: absolute; left: -7px; top: 274px; display: flex; height: 28px; background: #fff; }
.ft { width: 33px; display: flex; align-items: center; justify-content: center; border-right: 1px solid #eee; }
.ft:last-child { width: 39px; padding-right: 7px; border-right: 0; }

.tip { position: absolute; left: 162px; top: 445px; width: 290px; height: 38px; display: flex; align-items: center; gap: 6px; padding-left: 13px; background: #fff; border: 1px solid #b8b8b8; border-right: 0; color: #555; font-size: 13px; white-space: nowrap; filter: blur(.35px); }
.tip-x { flex: none; }
.tip-tail { position: absolute; left: 145px; top: 36px; }

.marks { position: absolute; left: 0; top: 0; pointer-events: none; }
.az { font: bold 8px "Liberation Sans", sans-serif; fill: #2a4a8a; }
.sort { font: bold 8px "Liberation Sans", sans-serif; }
.sort.a { fill: #2a60c0; }
.sort.z { fill: #c03030; }
```
